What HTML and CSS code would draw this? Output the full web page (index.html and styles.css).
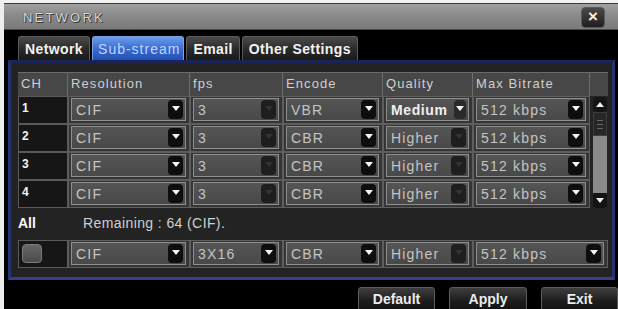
FILE: index.html
```html
<!DOCTYPE html>
<html>
<head>
<meta charset="utf-8">
<link rel="stylesheet" href="styles.css">
</head>
<body>
<div class="screen">
  <div class="titlebar">
    <span class="title">NETWORK</span>
    <span class="close">×</span>
  </div>
  <div class="tabs">
    <span class="tab">Network</span>
    <span class="tab active">Sub-stream</span>
    <span class="tab">Email</span>
    <span class="tab">Other Settings</span>
  </div>
  <div class="panel">
    <div class="grid head">
      <div class="hc">CH</div>
      <div class="hc">Resolution</div>
      <div class="hc">fps</div>
      <div class="hc">Encode</div>
      <div class="hc">Quality</div>
      <div class="hc">Max Bitrate</div>
      <div class="hc last"></div>
    </div>
    <div class="body">
      <div class="rows">
        <div class="grid row">
          <div class="ch">1</div>
          <div class="cell"><div class="sel"><span>CIF</span><i class="arr"></i></div></div>
          <div class="cell"><div class="sel"><span>3</span><i class="arr off"></i></div></div>
          <div class="cell"><div class="sel"><span>VBR</span><i class="arr"></i></div></div>
          <div class="cell"><div class="sel"><span class="hi">Medium</span><i class="arr small"></i></div></div>
          <div class="cell"><div class="sel"><span>512 kbps</span><i class="arr"></i></div></div>
        </div>
        <div class="grid row">
          <div class="ch">2</div>
          <div class="cell"><div class="sel"><span>CIF</span><i class="arr"></i></div></div>
          <div class="cell"><div class="sel"><span>3</span><i class="arr off"></i></div></div>
          <div class="cell"><div class="sel"><span>CBR</span><i class="arr"></i></div></div>
          <div class="cell"><div class="sel"><span>Higher</span><i class="arr off"></i></div></div>
          <div class="cell"><div class="sel"><span>512 kbps</span><i class="arr"></i></div></div>
        </div>
        <div class="grid row">
          <div class="ch">3</div>
          <div class="cell"><div class="sel"><span>CIF</span><i class="arr"></i></div></div>
          <div class="cell"><div class="sel"><span>3</span><i class="arr off"></i></div></div>
          <div class="cell"><div class="sel"><span>CBR</span><i class="arr"></i></div></div>
          <div class="cell"><div class="sel"><span>Higher</span><i class="arr off"></i></div></div>
          <div class="cell"><div class="sel"><span>512 kbps</span><i class="arr"></i></div></div>
        </div>
        <div class="grid row">
          <div class="ch">4</div>
          <div class="cell"><div class="sel"><span>CIF</span><i class="arr"></i></div></div>
          <div class="cell"><div class="sel"><span>3</span><i class="arr off"></i></div></div>
          <div class="cell"><div class="sel"><span>CBR</span><i class="arr"></i></div></div>
          <div class="cell"><div class="sel"><span>Higher</span><i class="arr off"></i></div></div>
          <div class="cell"><div class="sel"><span>512 kbps</span><i class="arr"></i></div></div>
        </div>
      </div>
      <div class="scroll">
        <i class="sbtn up"></i>
        <div class="thumb"><b></b><b></b><b></b></div>
        <div class="track"></div>
        <i class="sbtn"></i>
      </div>
    </div>
    <div class="allrow">
      <span class="all">All</span>
      <span class="remain">Remaining : 64 (CIF).</span>
    </div>
    <div class="grid row allgrid">
      <div class="ch"><span class="check"></span></div>
      <div class="cell"><div class="sel"><span>CIF</span><i class="arr"></i></div></div>
      <div class="cell"><div class="sel"><span>3X16</span><i class="arr"></i></div></div>
      <div class="cell"><div class="sel"><span>CBR</span><i class="arr"></i></div></div>
      <div class="cell"><div class="sel"><span>Higher</span><i class="arr off"></i></div></div>
      <div class="cell"><div class="sel"><span>512 kbps</span><i class="arr"></i></div></div>
    </div>
  </div>
  <div class="buttons">
    <span class="btn b1">Default</span>
    <span class="btn b2">Apply</span>
    <span class="btn b3">Exit</span>
  </div>
</div>
</body>
</html>
```
FILE: styles.css
```css
* { box-sizing: border-box; }
html, body { margin: 0; padding: 0; background: #000; }
body { width: 618px; height: 309px; overflow: hidden; font-family: "Liberation Sans", Arial, sans-serif; }

.screen {
  width: 618px; height: 309px;
  background: #000;
  border-left: 4px solid #eeeeee;
  border-top: 3px solid #f2f2f2;
}

.titlebar {
  height: 27px;
  display: flex; align-items: center; justify-content: space-between;
  padding: 0 13px 0 19px;
  background: linear-gradient(#a0a0a0, #8a8a8a 45%, #7a7a7a);
  border-top: 1px solid #3a3a3a;
  border-bottom: 1px solid #4a4a4a;
}
.title {
  font-size: 13px; letter-spacing: 2.2px; color: #dcdcdc;
  text-shadow: 0 0 1px #222, 1px 1px 0 #3a3a3a;
  padding-top: 1px;
}
.close {
  width: 24px; height: 21px; margin-top: 1px;
  background: linear-gradient(#4a4a4a, #1e1e1e);
  border: 1px solid #5a5a5a; border-radius: 4px;
  color: #f0f0f0; font-weight: bold; font-size: 17px; line-height: 18px;
  text-align: center;
}

.tabs {
  height: 30px;
  display: flex; align-items: flex-end; gap: 2px;
  padding-left: 14px;
}
.tab {
  height: 24px;
  padding: 0 6px;
  display: flex; align-items: center;
  font-size: 14px; font-weight: bold; color: #f2f2f2; letter-spacing: 0.4px;
  background: linear-gradient(#4a4a4a, #262626 60%, #1a1a1a);
  border: 1px solid #5a5a5a; border-bottom: none;
  border-radius: 3px 3px 0 0;
}
.tab.active {
  background: linear-gradient(#6c9cec, #3c6cd0 50%, #2050b4);
  color: #bcd6ff; font-weight: normal; letter-spacing: 1px; border-color: #7aa0e0;
  padding: 0 3px 0 5px;
}

.panel {
  margin: 0 3px 0 4px;
  height: 220px;
  border: 3px solid #243272;
  border-top-color: #1a2456;
  border-bottom-color: #32428a;
  background: #232323;
  padding: 9px 4px 0 7px;
}

.grid {
  display: grid;
  grid-template-columns: 50px 122px 93px 100px 90px 117px 18px;
}
.head { height: 24px; background: #474747; border-top: 1px solid #6a6a6a; }
.hc {
  border-right: 1px solid #6c6c6c;
  color: #cfcfcf; font-size: 13px; letter-spacing: 1.1px;
  padding: 3px 0 0 3px;
}
.hc.last { border-right: none; }

.body { display: flex; }
.rows { width: 572px; }
.rows .grid { grid-template-columns: 50px 122px 93px 100px 90px 117px; }
.row { height: 28px; }
.ch {
  background: #161616; border: 1px solid #5a5a5a;
  color: #f4f4f4; font-weight: bold; font-size: 12px;
  padding: 4px 0 0 3px;
}
.cell {
  background: #353535; border: 1px solid #5e5e5e;
  padding: 1px 3px 2px 2px;
}
.sel {
  height: 100%;
  display: flex; align-items: center; justify-content: space-between;
  background: linear-gradient(#555, #484848);
  border: 1px solid #8e8e8e;
  padding: 0 2px 0 4px;
}
.sel span { color: #c4c4c4; font-size: 14px; letter-spacing: 1.2px; }
.sel span.hi { color: #f0f0f0; font-weight: bold; letter-spacing: 0.6px; }

.arr {
  width: 15px; height: 19px;
  background: #0e0e0e; border-radius: 4px;
  display: flex; justify-content: center; padding-top: 6px;
}
.arr::after {
  content: ""; width: 0; height: 0;
  border-left: 4px solid transparent; border-right: 4px solid transparent;
  border-top: 5px solid #f4f4f4;
}
.arr.off { background: #1e1e1e; }
.arr.off::after { border-top-color: #333; }
.arr.small { width: 12px; background: #2a2a2a; }

.scroll {
  width: 18px; padding: 1px 1px 0 3px;
  display: flex; flex-direction: column;
}
.sbtn {
  height: 15px; background: #141414; border-radius: 4px;
  display: flex; justify-content: center; align-items: center;
}
.sbtn::after {
  content: ""; width: 0; height: 0;
  border-left: 4px solid transparent; border-right: 4px solid transparent;
  border-top: 5px solid #eee;
}
.sbtn.up::after { border-top: none; border-bottom: 5px solid #eee; }
.thumb {
  height: 24px; background: #262626; border: 1px solid #3c3c3c;
  display: flex; flex-direction: column; justify-content: center; gap: 3px; padding: 0 3px;
}
.thumb b { display: block; height: 1px; background: #666; }
.track { flex: 1; background: #8a8a8a; }

.allrow {
  height: 32px;
  display: flex; align-items: center; gap: 0;
  padding-bottom: 3px;
}
.all { width: 65px; color: #fafafa; font-weight: bold; font-size: 14px; }
.remain { color: #cfcfcf; font-size: 14px; letter-spacing: 0.4px; }

.allgrid { grid-template-columns: 50px 122px 93px 100px 90px 135px; }
.allgrid .ch { padding: 3px 0 0 3px; }
.check {
  display: block; width: 20px; height: 19px;
  background: linear-gradient(#666, #4a4a4a);
  border: 1px solid #7a7a7a; border-radius: 4px;
}

.buttons {
  display: flex; justify-content: flex-end; gap: 14px;
  padding-top: 7px;
}
.btn {
  height: 24px; width: 77px;
  display: flex; align-items: center; justify-content: center;
  background: linear-gradient(#3e3e3e, #1c1c1c 60%, #121212);
  border: 1px solid #5c5c5c; border-radius: 3px;
  color: #ececec; font-weight: bold; font-size: 14px;
}
.b2 { width: 78px; }
```
